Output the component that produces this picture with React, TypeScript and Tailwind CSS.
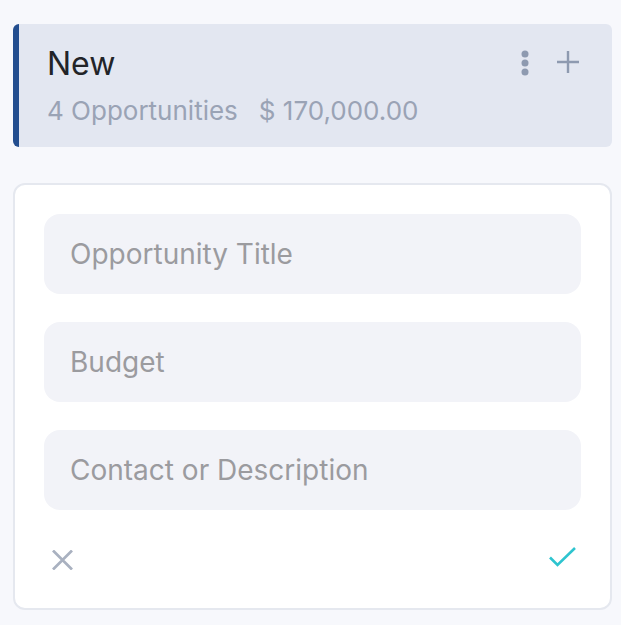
import React from 'react';

const DotsIcon = () => (
  <svg width="8" height="26" viewBox="0 0 8 26" fill="#8e9ab0">
    <circle cx="4" cy="4" r="3.5" />
    <circle cx="4" cy="13" r="3.5" />
    <circle cx="4" cy="22" r="3.5" />
  </svg>
);

const PlusIcon = () => (
  <svg width="24" height="24" viewBox="0 0 24 24" fill="none" stroke="#8e9ab0" strokeWidth="2.4">
    <path d="M12 1v22M1 12h22" />
  </svg>
);

const CloseIcon = () => (
  <svg width="21" height="20" viewBox="0 0 21 20" fill="none" stroke="#a9b1c0" strokeWidth="2.7">
    <path d="M1 0.5l19 19M20 0.5L1 19.5" />
  </svg>
);

const CheckIcon = () => (
  <svg width="27" height="20" viewBox="0 0 27 20" fill="none" stroke="#2ec4cf" strokeWidth="2.6">
    <path d="M1 10.5l7.5 7.5L26 1" />
  </svg>
);

const fields = ['Opportunity Title', 'Budget', 'Contact or Description'];

export default function App() {
  return (
    <div className="min-h-[625px] w-[621px] bg-[#f7f8fc] pt-6 pl-[13px] pr-[9px] font-['Inter',sans-serif]">
      <div className="flex h-[123px] rounded-md border-l-[6px] border-[#234e8f] bg-[#e3e7f1] pl-7 pr-8 pt-[21px]">
        <div className="flex-1">
          <div className="text-[32px] leading-[38px] text-[#222428]">New</div>
          <div className="mt-[13px] flex gap-[21px] text-[26px] leading-[30px] text-[#9aa3b5]">
            <span>4 Opportunities</span>
            <span>$ 170,000.00</span>
          </div>
        </div>
        <div className="flex items-start gap-[27px] pt-[5px]">
          <DotsIcon />
          <PlusIcon />
        </div>
      </div>
      <div className="mt-9 h-[427px] w-[599px] rounded-xl border-2 border-[#e5e8ef] bg-white px-[29px] pt-[29px]">
        <div className="flex flex-col gap-7">
          {fields.map((f) => (
            <input
              key={f}
              placeholder={f}
              className="h-[80px] w-full rounded-2xl bg-[#f2f3f8] px-[26px] text-[28px] text-[#333] outline-none placeholder:text-[#9b9b9f]"
            />
          ))}
        </div>
        <div className="mt-[37px] flex items-start justify-between pl-[8px] pr-[5px]">
          <div className="pt-[3px]"><CloseIcon /></div>
          <div><CheckIcon /></div>
        </div>
      </div>
    </div>
  );
}
